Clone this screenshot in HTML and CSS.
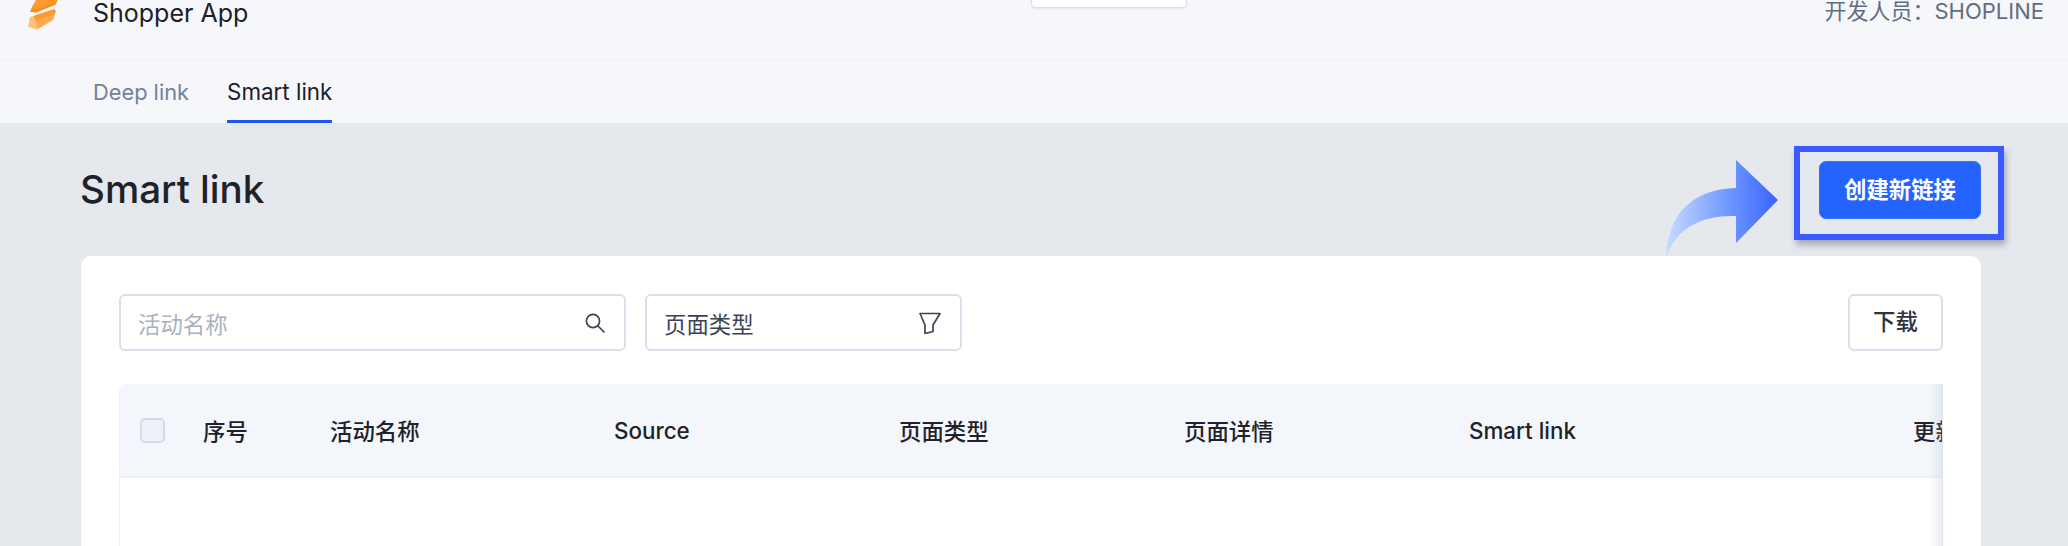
FILE: index.html
```html
<!DOCTYPE html>
<html lang="zh-CN">
<head>
<meta charset="utf-8">
<title>Smart link</title>
<link rel="stylesheet" href="styles.css">
</head>
<body>
<header class="topbar">
  <div class="brand">
    <svg class="logo" viewBox="27 0 32 32" width="32" height="32" aria-hidden="true">
      <polygon points="36,0 58,0 55.5,4.5 36,12.5 30,11.5 33,5" fill="#ff9a2f"/>
      <polygon points="30,11.5 36,12.5 55.5,4.5 56,2 36,9.5 32,8.5" fill="#ff8a1c"/>
      <polygon points="33,16 54,9 56,11 53,19 36,29" fill="#ff9a2f"/>
      <polygon points="36,21 55,13.5 53,20 37,29.5" fill="#ffab4d"/>
      <polygon points="30,17 33,16 36,21 37,29.5 28,27" fill="#ffc27e"/>
    </svg>
    <span class="app-name">Shopper App</span>
  </div>
  <div class="pill"></div>
  <div class="developer">开发人员：SHOPLINE</div>
</header>
<nav class="tabs">
  <a class="tab">Deep link</a>
  <a class="tab tab-active">Smart link</a>
</nav>
<main class="main">
  <div class="title-row">
    <h1 class="title">Smart link</h1>
    <button class="primary">创建新链接</button>
    <svg class="callout-arrow" viewBox="0 0 114 98" width="114" height="98" aria-hidden="true">
      <defs>
        <linearGradient id="arrowFill" x1="0" y1="0" x2="1" y2="0">
          <stop offset="0" stop-color="#c8dcff"/>
          <stop offset="0.55" stop-color="#6f99ff"/>
          <stop offset="1" stop-color="#3a62ff"/>
        </linearGradient>
      </defs>
      <path d="M0 98 C2 50 30 29 70 28 L70 0 L112 40 L70 83 L70 56 C35 55 10 68 0 98 Z" fill="url(#arrowFill)"/>
    </svg>
    <div class="callout-box"></div>
  </div>
  <section class="card">
    <div class="toolbar">
      <div class="field field-search">
        <span class="placeholder">活动名称</span>
        <svg class="field-icon" viewBox="0 0 20 20" width="20" height="20" aria-hidden="true">
          <circle cx="8" cy="8" r="6.6" fill="none" stroke="#3b4454" stroke-width="1.7"/>
          <path d="M13 13l6 6" fill="none" stroke="#3b4454" stroke-width="1.7" stroke-linecap="round"/>
        </svg>
      </div>
      <div class="field field-filter">
        <span class="field-value">页面类型</span>
        <svg class="field-icon" viewBox="0 0 22 22" width="22" height="22" aria-hidden="true">
          <path d="M1 1.500h20l-7 11.500v6.500l-8 2v-8.500z" fill="none" stroke="#3b4454" stroke-width="1.7" stroke-linejoin="round"/>
        </svg>
      </div>
      <button class="download">下载</button>
    </div>
    <div class="table">
      <div class="thead">
        <div class="cell cell-check"><span class="checkbox"></span></div>
        <div class="cell cell-index">序号</div>
        <div class="cell cell-name">活动名称</div>
        <div class="cell cell-wide">Source</div>
        <div class="cell cell-wide">页面类型</div>
        <div class="cell cell-wide">页面详情</div>
        <div class="cell cell-link">Smart link</div>
        <div class="cell cell-updated">更新时间</div>
      </div>
      <div class="tbody"></div>
      <div class="fixed-shadow"></div>
    </div>
  </section>
</main>
</body>
</html>
```
FILE: styles.css
```css
* { box-sizing: border-box; }
html, body { margin: 0; height: 100%; }
body {
  width: 2068px;
  height: 546px;
  overflow: hidden;
  background: #e5e8ed;
  font-family: Inter, "Noto Sans CJK SC", sans-serif;
  color: #1f2329;
}
.topbar {
  height: 60px;
  background: #f6f7fb;
  border-bottom: 1px solid #eeeff3;
  display: flex;
  align-items: flex-start;
  justify-content: space-between;
  padding: 0 24px 0 27px;
}
.brand { display: flex; align-items: flex-start; gap: 34px; width: 1004px; }
.logo { flex: none; display: block; }
.app-name { font-size: 25px; line-height: 26px; font-weight: 400; color: #1c2026; }
.pill {
  width: 156px;
  height: 8px;
  background: #fff;
  border: 1px solid #dcdfeb;
  border-top: 0;
  border-radius: 0 0 5px 5px;
  box-shadow: 0 1px 2px rgba(80, 90, 120, .12);
}
.developer { margin-left: auto; font-size: 22px; line-height: 22px; color: #626d82; }
.tabs {
  height: 63px;
  background: #f6f7fb;
  display: flex;
  align-items: stretch;
  gap: 38px;
  padding-left: 93px;
}
.tab {
  display: flex;
  align-items: center;
  padding-top: 3px;
  border-bottom: 3px solid transparent;
  font-size: 21.8px;
  color: #74819a;
}
.tab-active { color: #1c2026; border-bottom-color: #1f56f2; font-size: 22.4px; }
.main { padding: 0 87px 0 81px; }
.title-row {
  position: relative;
  height: 133px;
  padding-top: 38px;
  display: flex;
  align-items: flex-start;
  justify-content: space-between;
}
.title {
  margin: 0 0 0 -1px;
  font-size: 38.6px;
  line-height: 56px;
  font-weight: 500;
  color: #1f2329;
}
.primary {
  width: 162px;
  height: 58px;
  background: #2563ff;
  border: 1px solid #3a70ff;
  border-radius: 7px;
  color: #fff;
  font: 700 22.4px/1 Inter, "Noto Sans CJK SC", sans-serif;
  padding: 0;
}
.callout-arrow { position: absolute; left: 1585px; top: 37px; }
.callout-box {
  position: absolute;
  left: 1713px;
  top: 23px;
  width: 210px;
  height: 94px;
  border: 6px solid #3a5bff;
  box-shadow: 2px 5px 6px rgba(70, 80, 100, .4);
}
.card {
  height: 290px;
  background: #fff;
  border-radius: 10px 10px 0 0;
  padding: 38px 38px 0;
}
.toolbar { display: flex; gap: 19px; height: 57px; }
.field {
  display: flex;
  align-items: center;
  justify-content: space-between;
  height: 57px;
  border: 2px solid #dcdfeb;
  border-radius: 6px;
  padding: 0 19px 0 17px;
  font-size: 22.4px;
}
.field-search { width: 507px; }
.field-filter { width: 317px; }
.placeholder { color: #a9b1bf; }
.field-value { color: #3b4454; }
.field-icon { flex: none; }
.download {
  margin-left: auto;
  width: 95px;
  height: 57px;
  background: #fff;
  border: 2px solid #dcdfeb;
  border-radius: 6px;
  color: #2c3442;
  font: 500 22.4px/1 Inter, "Noto Sans CJK SC", sans-serif;
  padding: 0;
}
.table {
  position: relative;
  margin-top: 33px;
  height: 162px;
  overflow: hidden;
  border-left: 1px solid #eef1f6;
  border-radius: 8px 0 0 0;
}
.thead {
  height: 94px;
  background: #f3f6fb;
  border-bottom: 2px solid #eef1f6;
  display: flex;
  align-items: center;
  font-size: 22.4px;
  font-weight: 500;
  color: #1f2329;
  white-space: nowrap;
}
.cell { flex: none; }
.cell-check { width: 83px; padding-left: 20px; display: flex; }
.cell-index { width: 127px; }
.cell-name { width: 284px; }
.cell-wide { width: 285px; }
.cell-link { width: 444px; }
.checkbox {
  width: 25px;
  height: 25px;
  background: #eef1f8;
  border: 2px solid #d5d9e6;
  border-radius: 5px;
}
.tbody { height: 68px; background: #fff; }
.fixed-shadow {
  position: absolute;
  top: 0;
  right: 0;
  bottom: 0;
  width: 14px;
  background: linear-gradient(to right, rgba(170, 178, 195, 0), rgba(170, 178, 195, .22));
  border-right: 1px solid #dfe2ea;
}
```
